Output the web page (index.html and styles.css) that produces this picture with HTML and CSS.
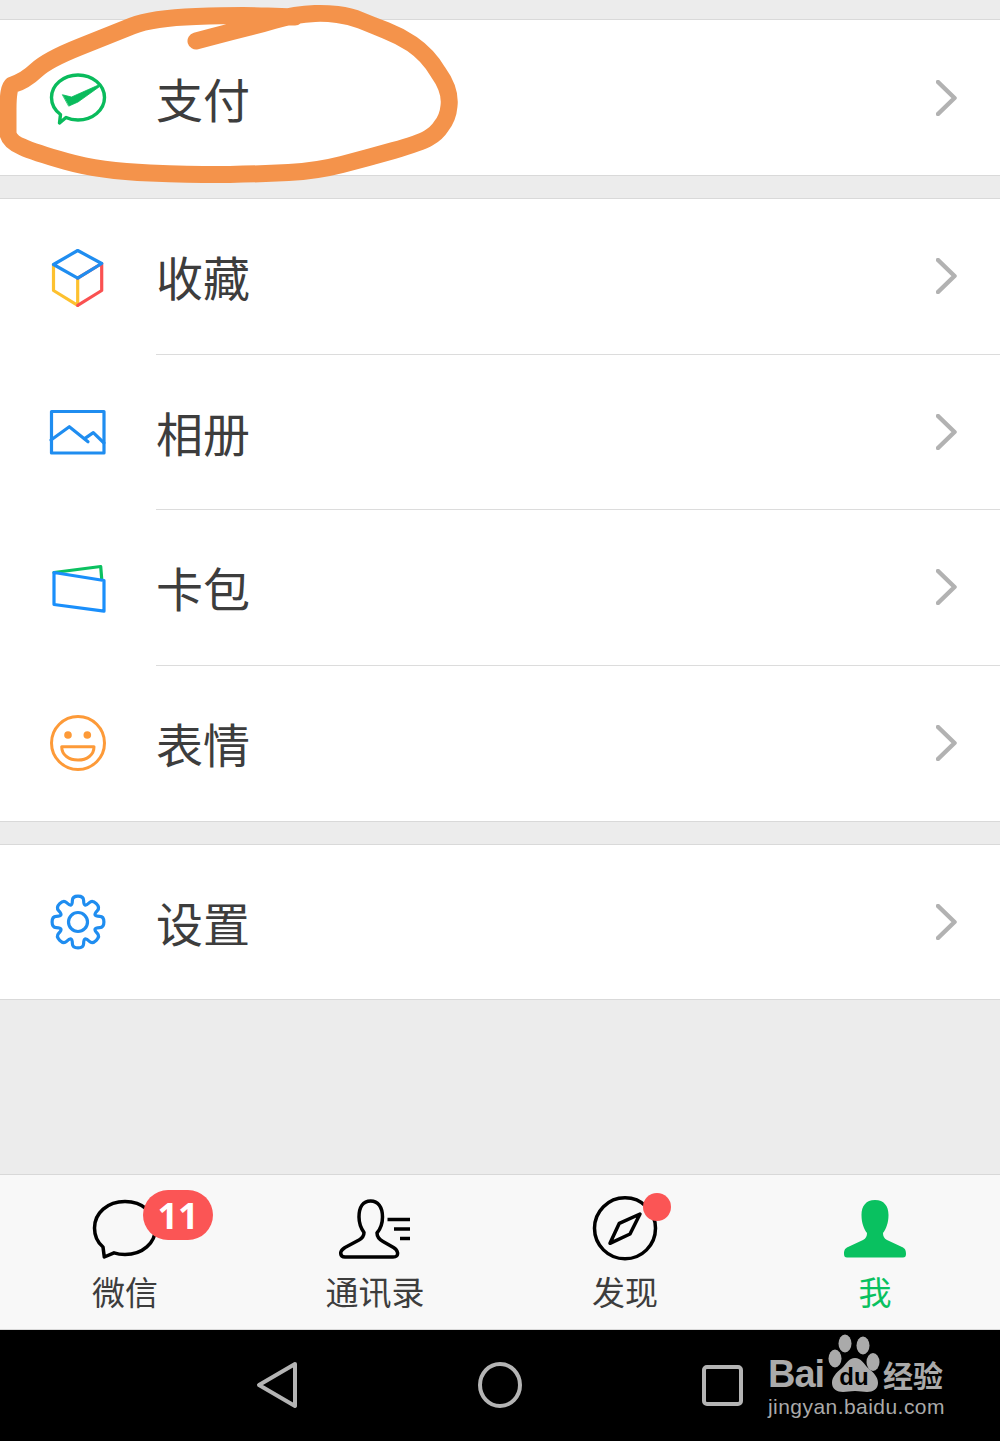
FILE: index.html
```html
<!DOCTYPE html>
<html lang="zh-CN">
<head>
<meta charset="utf-8">
<title>我</title>
<link rel="stylesheet" href="styles.css">
</head>
<body>
<div class="page">
  <main class="content">
    <section class="group">
      <div class="row first">
        <svg class="icon" viewBox="0 0 56 56"><path class="stroke-green" d="M10.500 44.500C4.500 40 1.500 34 1.500 27.500 1.500 15 13.500 5 28 5s26.500 10 26.500 22.500S42.500 50 28 50c-4.500 0-8.500-.8-12-2.500L9.500 53z"/><path class="fill-green" d="M12.700 24.800L21.500 27 48.500 15 49 17 28 32 19 36z"/></svg>
        <div class="body"><span class="label">支付</span><svg class="chev" viewBox="0 0 22 36"><path d="M2 2l16.500 16L2 34"/></svg></div>
      </div>
    </section>
    <section class="group">
      <div class="row">
        <svg class="icon" viewBox="0 0 56 56"><path class="stroke-yellow" d="M3.500 15.500v26L27.700 56.300V29.200"/><path class="stroke-red" d="M27.700 56.300L51.700 41.500v-27L27.700 29.200"/><path class="stroke-blue" d="M3.500 15.500L27.700 1.500l24 13-24 14.700z"/></svg>
        <div class="body"><span class="label">收藏</span><svg class="chev" viewBox="0 0 22 36"><path d="M2 2l16.500 16L2 34"/></svg></div>
      </div>
      <div class="row">
        <svg class="icon" viewBox="0 0 56 56"><rect class="stroke-blue" x="1.500" y="7.500" width="52.500" height="41.500"/><path class="stroke-blue" d="M1 36L19.300 22.700 38 37.700M35 34.300L43.300 28.700 54 39"/></svg>
        <div class="body"><span class="label">相册</span><svg class="chev" viewBox="0 0 22 36"><path d="M2 2l16.500 16L2 34"/></svg></div>
      </div>
      <div class="row">
        <svg class="icon" viewBox="0 0 56 56"><path class="stroke-green3" d="M4 12.500L50.700 6.500l1 12.300"/><path class="stroke-blue2" d="M4 12.500l50 8v30.700L4 44.500z"/></svg>
        <div class="body"><span class="label">卡包</span><svg class="chev" viewBox="0 0 22 36"><path d="M2 2l16.500 16L2 34"/></svg></div>
      </div>
      <div class="row">
        <svg class="icon" viewBox="0 0 56 56"><circle class="stroke-orange" cx="28" cy="28" r="26.500"/><circle class="fill-orange" cx="18" cy="20" r="3.800"/><circle class="fill-orange" cx="37.300" cy="20" r="3.800"/><path class="stroke-orange" d="M11.700 31.700H44C44 40 37 45 28 45S11.700 40 11.700 31.700z"/></svg>
        <div class="body"><span class="label">表情</span><svg class="chev" viewBox="0 0 22 36"><path d="M2 2l16.500 16L2 34"/></svg></div>
      </div>
    </section>
    <section class="group">
      <div class="row last">
        <svg class="icon" viewBox="0 0 56 56"><path class="stroke-blue" d="M28 2.100Q33.500 2.100 33.600 6.250Q33.700 10.400 35.050 10.950Q36.400 11.500 39.400 8.650Q42.400 5.800 46.300 9.700Q50.200 13.600 47.350 16.600Q44.500 19.600 45.050 20.950Q45.600 22.300 49.750 22.400Q53.900 22.500 53.900 28Q53.900 33.500 49.750 33.600Q45.600 33.700 45.050 35.050Q44.500 36.400 47.350 39.400Q50.200 42.400 46.300 46.300Q42.400 50.200 39.400 47.350Q36.400 44.500 35.050 45.050Q33.700 45.600 33.600 49.750Q33.500 53.900 28 53.900Q22.500 53.900 22.400 49.750Q22.300 45.600 20.950 45.050Q19.600 44.500 16.600 47.350Q13.600 50.200 9.700 46.300Q5.800 42.400 8.650 39.400Q11.500 36.400 10.950 35.050Q10.400 33.700 6.250 33.600Q2.100 33.500 2.100 28Q2.100 22.500 6.250 22.400Q10.400 22.300 10.950 20.950Q11.500 19.600 8.650 16.600Q5.800 13.600 9.700 9.700Q13.600 5.800 16.600 8.650Q19.600 11.500 20.950 10.950Q22.300 10.400 22.400 6.250Q22.500 2.100 28 2.100z"/><circle class="stroke-blue" cx="28" cy="28" r="9.500"/></svg>
        <div class="body"><span class="label">设置</span><svg class="chev" viewBox="0 0 22 36"><path d="M2 2l16.500 16L2 34"/></svg></div>
      </div>
    </section>
  </main>
  <nav class="tabs">
    <div class="tab">
      <svg class="tab-icon" viewBox="0 0 72 70"><path class="stroke-black" d="M14 52C8 47 5.500 41 5.500 33 5.500 18 18.500 6.500 36 6.500S66.500 18 66.500 33 53.500 59.500 36 59.500c-4 0-7.500-.5-11-1.700L15.300 62z"/></svg>
      <span class="badge">11</span>
      <span class="tab-label">微信</span>
    </div>
    <div class="tab">
      <svg class="tab-icon" viewBox="0 0 72 70"><path class="stroke-black" d="M31.700 6C24 6 20 12 20 22c0 7 2.500 12 5 15.500 0 3.500-1.500 5.500-5 7.500L6 52.500C3 54.500 1.700 56 1.700 58c0 3 1.800 4 4.300 4h48c3.500 0 5-1.500 4.500-4.500-.4-2-1.500-3.500-4-5L44 46.500c-3.500-2-6-4-6-8.500 3-3.500 5.500-9 5.500-16 0-10-4.500-16-11.800-16z"/><path class="stroke-lines" d="M48.500 24.500H71M55 34H71M61 43.500h10"/></svg>
      <span class="tab-label">通讯录</span>
    </div>
    <div class="tab">
      <svg class="tab-icon" viewBox="0 0 72 70"><circle class="stroke-black" cx="36" cy="33.300" r="30.500"/><path class="stroke-black" d="M51 19L30.300 28.300 21 48.300 41 39z"/></svg>
      <span class="dot"></span>
      <span class="tab-label">发现</span>
    </div>
    <div class="tab on">
      <svg class="tab-icon" viewBox="0 0 72 70"><path class="fill-me" d="M36 5c-9 0-13.500 6-13.500 15 0 8 2.500 14 5.500 18 0 3-1 5.500-4 7L9 52c-3 1.500-4 3-4 7 0 2.500 1 3.500 3 3.500h56c2 0 3-1 3-3.500 0-4-1-5.500-4-7l-15-7c-3-1.500-4-4-4-7 3-4 5.500-10 5.500-18C49.500 11 45 5 36 5z"/></svg>
      <span class="tab-label">我</span>
    </div>
  </nav>
  <footer class="sysbar">
    <svg class="sys" viewBox="0 0 44 48"><path d="M39 3L3 24l36 21z"/></svg>
    <svg class="sys" viewBox="0 0 44 48"><ellipse cx="22" cy="24" rx="20" ry="21"/></svg>
    <svg class="sys" viewBox="0 0 44 48"><rect x="4" y="6" width="37" height="37" rx="3"/></svg>
  </footer>
  <svg class="scribble" viewBox="0 0 1000 200"><path d="M196 41L213 36.500Q230 32 246 28Q262 24 273.500 20.500Q285 17 295 15.500Q305 14 315 13.500Q325 13 337.500 14.500Q350 16 361 20.500Q372 25 386 30.500Q400 36 412 44Q428 55 438 72Q451 90 449 106Q448 118 441 126.500Q437 133 428.500 138Q420 143 393.500 150.500Q367 158 342 164.500Q317 171 288.500 172.500Q260 174 230 174.500Q200 175 150 173Q100 171 66.500 161.500Q33 152 22.500 147Q10 142 8 134Q8 130 8 109Q8 88 12 85Q25 81 36 70.500Q47 60 79.500 47Q112 34 132 26Q152 18 196 16.500Q240 15 267.500 16L295 17"/></svg>
  <div class="mark">
    <div class="mark-top"><span class="mark-bai">Bai</span><span class="mark-paw"><svg viewBox="0 0 52 60"><ellipse cx="17" cy="9.500" rx="6.500" ry="9"/><ellipse cx="35" cy="11.500" rx="6.500" ry="9"/><ellipse cx="7" cy="24.500" rx="6.500" ry="9"/><ellipse cx="45" cy="28" rx="6.500" ry="9"/><path d="M27 24c6 0 9 6 13 10 6 5 10 9 10 15 0 6-5 9-11 9-4 0-7-1-12-1s-8 1-12 1c-6 0-11-3-11-9 0-6 4-10 10-15 4-4 7-10 13-10z"/></svg><span class="mark-du">du</span></span><span class="mark-cn">经验</span></div>
    <div class="mark-url">jingyan.baidu.com</div>
  </div>
</div>
</body>
</html>
```
FILE: styles.css
```css
* { box-sizing: border-box; }
html, body { margin: 0; padding: 0; }
body { background: #ececec; font-family: "Noto Sans CJK SC", "Noto Sans", sans-serif; }
.page { position: relative; width: 1000px; height: 1441px; display: flex; flex-direction: column; overflow: hidden; }
.content { flex: 1; display: flex; flex-direction: column; gap: 22px; padding-top: 19px; }
.group { background: #fff; border-top: 1px solid #d9d9d9; border-bottom: 1px solid #d9d9d9; }
.row { display: flex; align-items: center; height: 155.5px; padding-left: 50px; }
.row.first { height: 155px; }
.row.last { height: 154px; }
.row:last-child .body { border-bottom: 0; }
.icon { width: 56px; height: 56px; overflow: visible; flex: none; }
.body { flex: 1; align-self: stretch; margin-left: 50px; display: flex; align-items: center; justify-content: space-between; padding-right: 42px; border-bottom: 1px solid #dcdcdc; }
.label { font-size: 47px; line-height: 1; color: #3d3d3d; margin-top: -1px; }
.chev { width: 22px; height: 36px; fill: none; stroke: #b2b2b2; stroke-width: 4.5; }
svg path, svg rect, svg circle, svg ellipse { stroke-linejoin: round; stroke-linecap: round; }
.stroke-green { fill: none; stroke: #09bb5c; stroke-width: 3.4; }
.fill-green { fill: #09bb5c; stroke: #09bb5c; stroke-width: .8; }
.stroke-blue { fill: none; stroke: #1f8df0; stroke-width: 3.2; }
.stroke-blue2 { fill: none; stroke: #1a8ffb; stroke-width: 3.2; }
.stroke-green3 { fill: none; stroke: #0bc160; stroke-width: 3.2; }
.stroke-yellow { fill: none; stroke: #fdc12f; stroke-width: 3.2; }
.stroke-red { fill: none; stroke: #fa5151; stroke-width: 3.2; }
.stroke-orange { fill: none; stroke: #fd9a38; stroke-width: 3; }
.fill-orange { fill: #fd9a38; }
.stroke-black { fill: none; stroke: #000; stroke-width: 3.5; }
svg path.stroke-lines { fill: none; stroke: #000; stroke-width: 3.5; stroke-linecap: butt; }
.fill-me { fill: #09c160; }
.tabs { position: relative; height: 156px; flex: none; display: grid; grid-template-columns: repeat(4, 1fr); background: #f8f8f8; border-top: 1px solid #d8d8d8; border-bottom: 1px solid #d8d8d8; }
.tab { position: relative; display: flex; flex-direction: column; align-items: center; padding-top: 20px; }
.tab-icon { width: 72px; height: 70px; flex: none; }
.tab-label { font-size: 33px; line-height: 40px; color: #3d3d3d; margin-top: 6px; }
.tab.on .tab-label { color: #09c160; }
.badge { position: absolute; left: 143px; top: 15px; width: 70px; height: 50px; border-radius: 25px; background: #fb5555; color: #fff; font: 700 36px/52px "Noto Sans", sans-serif; text-align: center; }
.dot { position: absolute; left: 143px; top: 18px; width: 28px; height: 28px; border-radius: 50%; background: #fb5555; }
.sysbar { height: 111px; flex: none; background: #000; display: flex; align-items: flex-start; justify-content: center; gap: 178px; padding: 31px 0 0 0; }
.sys { width: 44px; height: 48px; fill: none; stroke: #b4b4b4; stroke-width: 4; }
.scribble { position: absolute; left: 0; top: 0; width: 1000px; height: 200px; fill: none; stroke: #f4934b; stroke-width: 17; pointer-events: none; }
.scribble path { stroke-linecap: round; stroke-linejoin: round; fill: none; }
.mark { position: absolute; left: 768px; top: 1334px; width: 180px; color: #aaa; }
.mark-top { display: flex; align-items: flex-end; height: 60px; }
.mark-bai { font: bold 38px/36px "Liberation Sans", sans-serif; letter-spacing: -1px; width: 60px; flex: none; margin-bottom: 2px; }
.mark-paw { position: relative; width: 52px; height: 60px; flex: none; margin-right: 3px; }
.mark-paw svg { display: block; width: 52px; height: 60px; fill: #aaa; }
.mark-du { position: absolute; left: 0; right: 0; bottom: 4px; text-align: center; font: bold 24px/26px "Liberation Sans", sans-serif; color: #000; }
.mark-cn { font-size: 30px; line-height: 36px; font-weight: 700; margin-bottom: 2px; white-space: nowrap; }
.mark-url { font: 21px/24px "Liberation Sans", sans-serif; letter-spacing: .45px; white-space: nowrap; margin-top: 1px; }
```
